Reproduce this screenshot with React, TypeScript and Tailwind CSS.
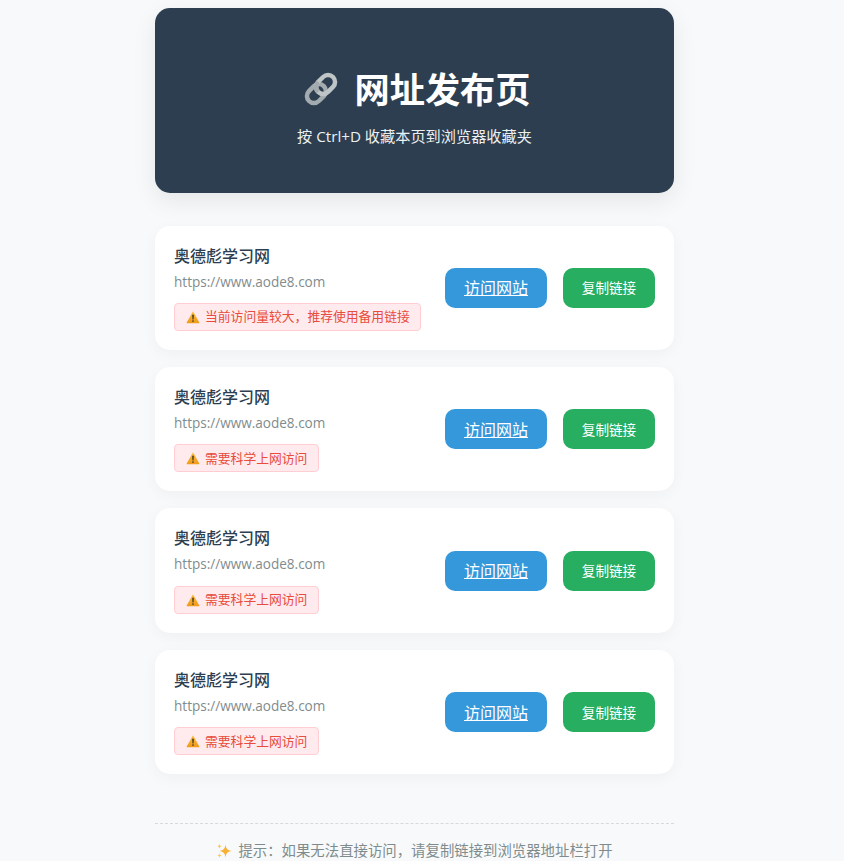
const font = { fontFamily: '"Open Sans","Noto Sans CJK SC",sans-serif' };

function LinkIcon() {
  return (
    <svg width="38" height="38" viewBox="0 0 38 38" className="shrink-0" fill="none">
      <g transform="rotate(-45 19 19)">
        <rect x="2" y="12" width="21" height="14" rx="7" stroke="#a3abaf" strokeWidth="4.500" />
        <rect x="15" y="12" width="21" height="14" rx="7" stroke="#bfc5c7" strokeWidth="4.500" />
        <path d="M15 19a7 7 0 0 1 7-7" stroke="#a3abaf" strokeWidth="4.500" />
      </g>
    </svg>
  );
}

function WarnIcon() {
  return (
    <svg width="14" height="14" viewBox="0 0 14 14" className="shrink-0">
      <defs>
        <linearGradient id="warnFill" x1="0" y1="0" x2="0" y2="1">
          <stop offset="0" stopColor="#fbbf3f" />
          <stop offset="1" stopColor="#f09a1a" />
        </linearGradient>
      </defs>
      <path d="M7 1.200 13.300 12.600a.4.4 0 0 1-.35.6H1.050a.4.4 0 0 1-.35-.6Z" fill="url(#warnFill)" />
      <path d="M6.200 4.800h1.600L7.500 9.400h-1Z" fill="#3f3426" />
      <circle cx="7" cy="11" r=".85" fill="#3f3426" />
    </svg>
  );
}

function Sparkle() {
  return (
    <svg width="16" height="16" viewBox="0 0 16 16" className="shrink-0">
      <path d="M9.500 1.500C10.100 5.700 11.300 7.200 15.800 8c-4.500.8-5.700 2.300-6.300 6.500C8.900 10.300 7.700 8.800 3.200 8c4.500-.8 5.700-2.300 6.300-6.500Z" fill="#f8b133" />
      <path d="M3.500.8c.3 1.600.9 2.200 2.400 2.500-1.500.3-2.100.9-2.400 2.500-.3-1.600-.9-2.200-2.400-2.500C2.600 3 3.200 2.400 3.500.8Z" fill="#fbc858" />
      <path d="M3.500 10.200c.3 1.500.8 2 2.300 2.300-1.500.3-2 .8-2.300 2.300-.3-1.500-.8-2-2.300-2.300 1.500-.3 2-.8 2.300-2.300Z" fill="#fbc858" />
    </svg>
  );
}

function Card({ note }: { note: string }) {
  return (
    <div className="flex items-center justify-between rounded-[15px] bg-white pt-[18.500px] pr-[19px] pb-[19.100px] pl-[19px] shadow-[0_4px_15px_rgba(0,0,0,0.04)]">
      <div className="flex flex-col items-start">
        <div className="mt-[0.500px] text-[16px] leading-[22px] font-medium text-[#2c3e50]">奥德彪学习网</div>
        <div className="mt-[5px] text-[13.550px] leading-[20px] text-[#7f8c8d]">https://www.aode8.com</div>
        <div className="mt-[11.400px] flex h-[28px] items-center gap-[5px] rounded-[4px] border border-[#ffcdd2] bg-[#ffebee] pr-[10.500px] pl-[11px] text-[12.800px] text-[#e74c3c]">
          <WarnIcon />
          <span>{note}</span>
        </div>
      </div>
      <div className="mt-[1px] flex items-center gap-[16px]">
        <a href="#" className="flex h-[40px] w-[102px] items-center justify-center rounded-[10px] bg-[#3498db] pt-[1px] text-[16px] text-white underline">访问网站</a>
        <button className="flex h-[40px] w-[92px] items-center justify-center rounded-[10px] bg-[#27ae60] pt-[1px] text-[13.600px] text-white">复制链接</button>
      </div>
    </div>
  );
}

export default function App() {
  return (
    <div className="h-[861px] overflow-hidden bg-[#f8f9fa]" style={font}>
      <div className="ml-[155px] w-[519px] pt-[8px]">
        <header className="flex h-[185px] flex-col items-center justify-center rounded-[15px] bg-[#2c3e50] pt-[11px] text-white shadow-[0_8px_25px_rgba(0,0,0,0.08)]">
          <h1 className="ml-[3px] flex items-center gap-[15px] text-[35.200px] leading-[50px] font-bold">
            <LinkIcon />
            <span>网址发布页</span>
          </h1>
          <p className="mt-[10px] text-[15.200px] leading-[24px] text-[#ecf0f1]">按 Ctrl+D 收藏本页到浏览器收藏夹</p>
        </header>
        <main className="mt-[32.500px] flex flex-col gap-[17px]">
          <Card note="当前访问量较大，推荐使用备用链接" />
          <Card note="需要科学上网访问" />
          <Card note="需要科学上网访问" />
          <Card note="需要科学上网访问" />
        </main>
        <footer className="mt-[48.500px] flex items-center justify-center gap-[6px] border-t border-dashed border-[#d5dadd] pt-[16px] text-[14.400px] leading-[22px] text-[#7f8c8d]">
          <Sparkle />
          <span>提示：如果无法直接访问，请复制链接到浏览器地址栏打开</span>
        </footer>
      </div>
    </div>
  );
}
